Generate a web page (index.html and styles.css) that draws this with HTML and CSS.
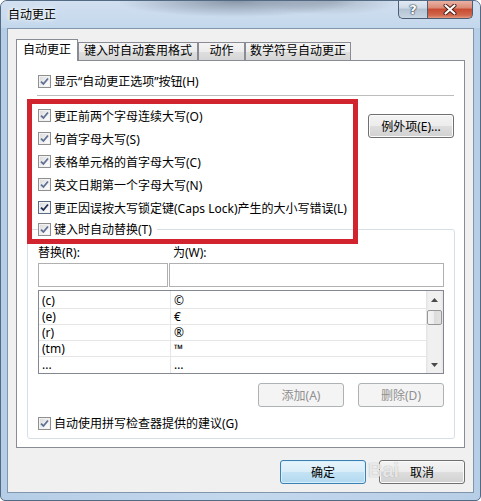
FILE: index.html
```html
<!DOCTYPE html>
<html lang="zh-CN">
<head>
<meta charset="utf-8">
<title>自动更正</title>
<link rel="stylesheet" href="styles.css">
</head>
<body>
<div class="window">
  <div class="titlebar">
    <span class="title">自动更正</span>
    <div class="caps">
      <div class="cap help">?</div>
      <div class="cap close">
        <svg width="14" height="11" viewBox="0 0 14 11"><path class="x-out" d="M2.5 1.5 L11.5 9.5 M11.5 1.5 L2.5 9.5"/><path class="x-in" d="M2.5 1.5 L11.5 9.5 M11.5 1.5 L2.5 9.5"/></svg>
      </div>
    </div>
  </div>
  <div class="body">
    <div class="client">
      <div class="tabs">
        <div class="tab active t1">自动更正</div>
        <div class="tab t2">键入时自动套用格式</div>
        <div class="tab t3">动作</div>
        <div class="tab t4">数学符号自动更正</div>
      </div>
      <div class="panel">
        <div class="row show-row"><span class="cb"><svg width="9" height="9" viewBox="0 0 9 9"><path d="M1 4.6 L3.4 7 L8 1.5"/></svg></span><span>显示“自动更正选项”按钮(H)</span></div>
        <div class="sep"></div>
        <div class="opts">
          <div class="opt-list">
            <div class="row"><span class="cb"><svg width="9" height="9" viewBox="0 0 9 9"><path d="M1 4.6 L3.4 7 L8 1.5"/></svg></span><span>更正前两个字母连续大写(O)</span></div>
            <div class="row"><span class="cb"><svg width="9" height="9" viewBox="0 0 9 9"><path d="M1 4.6 L3.4 7 L8 1.5"/></svg></span><span>句首字母大写(S)</span></div>
            <div class="row"><span class="cb"><svg width="9" height="9" viewBox="0 0 9 9"><path d="M1 4.6 L3.4 7 L8 1.5"/></svg></span><span>表格单元格的首字母大写(C)</span></div>
            <div class="row"><span class="cb"><svg width="9" height="9" viewBox="0 0 9 9"><path d="M1 4.6 L3.4 7 L8 1.5"/></svg></span><span>英文日期第一个字母大写(N)</span></div>
            <div class="row"><span class="cb dark"><svg width="9" height="9" viewBox="0 0 9 9"><path d="M1 4.6 L3.4 7 L8 1.5"/></svg></span><span>更正因误按大写锁定键(Caps Lock)产生的大小写错误(L)</span></div>
          </div>
          <button class="btn exc">例外项(E)...</button>
        </div>
        <fieldset class="group">
          <legend><span class="row"><span class="cb"><svg width="9" height="9" viewBox="0 0 9 9"><path d="M1 4.6 L3.4 7 L8 1.5"/></svg></span><span>键入时自动替换(T)</span></span></legend>
          <div class="labels"><span class="lbl1">替换(R):</span><span>为(W):</span></div>
          <div class="inputs"><div class="input i1"></div><div class="input i2"></div></div>
          <div class="list">
            <div class="grid">
              <div class="lrow"><span class="c1">(c)</span><span class="c2">©</span></div>
              <div class="lrow"><span class="c1">(e)</span><span class="c2">€</span></div>
              <div class="lrow"><span class="c1">(r)</span><span class="c2">®</span></div>
              <div class="lrow"><span class="c1">(tm)</span><span class="c2">™</span></div>
              <div class="lrow last"><span class="c1">...</span><span class="c2">…</span></div>
            </div>
            <div class="sb">
              <div class="sb-btn"><svg width="7" height="4" viewBox="0 0 7 4"><path d="M0 4 L3.5 0 L7 4 Z"/></svg></div>
              <div class="sb-track"><div class="thumb"></div></div>
              <div class="sb-btn"><svg width="7" height="4" viewBox="0 0 7 4"><path d="M0 0 L7 0 L3.5 4 Z"/></svg></div>
            </div>
          </div>
          <div class="grp-btns">
            <button class="btn dis">添加(A)</button>
            <button class="btn dis">删除(D)</button>
          </div>
          <div class="row spell-row"><span class="cb"><svg width="9" height="9" viewBox="0 0 9 9"><path d="M1 4.6 L3.4 7 L8 1.5"/></svg></span><span>自动使用拼写检查器提供的建议(G)</span></div>
        </fieldset>
        <div class="redbox"></div>
      </div>
      <div class="footer">
        <button class="btn def">确定</button>
        <button class="btn">取消</button>
      </div>
    </div>
  </div>
  <div class="wm">Bai</div>
</div>
</body>
</html>
```

FILE: styles.css
```css
html, body {
  margin: 0;
  padding: 0;
}
body {
  width: 481px;
  height: 501px;
  overflow: hidden;
  font-family: "Noto Sans", "Noto Sans CJK SC", sans-serif;
  font-size: 12px;
  color: #000;
  background: #fff;
}
.window {
  position: relative;
  width: 481px;
  height: 501px;
  box-sizing: border-box;
  border: 1px solid #536a84;
  border-radius: 7px 7px 5px 5px;
  background: linear-gradient(to right, #b5cde6, #c4d8ed 50%, #b7cee7);
  display: flex;
  flex-direction: column;
  overflow: hidden;
}
.titlebar {
  flex: none;
  height: 27px;
  display: flex;
  justify-content: space-between;
  align-items: flex-start;
  padding: 0 7px;
  background:
    radial-gradient(ellipse 120px 16px at 235px 0, rgba(78, 90, 108, .55), rgba(78, 90, 108, 0)),
    radial-gradient(ellipse 70px 14px at 330px 0, rgba(95, 105, 120, .35), rgba(95, 105, 120, 0)),
    linear-gradient(#d2e0f0, #c3d7ec);
}
.title {
  line-height: 26px;
  padding-top: 1px;
  white-space: nowrap;
  text-shadow: 0 0 6px #fff, 0 0 3px #fff;
}
.caps {
  display: flex;
  margin-top: -1px;
}
.cap {
  height: 19px;
  box-sizing: border-box;
  display: flex;
  align-items: center;
  justify-content: center;
  border: 1px solid #4c5d75;
  border-top: none;
}
.help {
  width: 29px;
  border-right: none;
  border-radius: 0 0 0 5px;
  background: linear-gradient(#e4ecf5, #cfdae6 45%, #b3c2d3 50%, #c8d5e2);
  color: #fff;
  font: bold 13px "DejaVu Sans", sans-serif;
  text-shadow: 0 0 1px #2c3a50, 0 0 1px #2c3a50, 0 0 2px #2c3a50;
}
.close {
  width: 46px;
  border-radius: 0 0 5px 0;
  background: linear-gradient(#ebb6a9, #db8a76 45%, #c74a30 50%, #d1684c 85%, #e59a80);
}
.x-out { stroke: #4a1c14; stroke-width: 4; stroke-linecap: round; fill: none; }
.x-in { stroke: #fff; stroke-width: 2.2; stroke-linecap: round; fill: none; }

.body {
  flex: 1;
  display: flex;
  padding: 0 6px 7px;
}
.client {
  flex: 1;
  box-sizing: border-box;
  border: 1px solid #8195ad;
  background: #f0f0f0;
  display: flex;
  flex-direction: column;
  padding: 10px 8px 8px;
}
.tabs {
  display: flex;
  height: 21px;
  align-items: flex-end;
  position: relative;
  z-index: 1;
  flex: none;
}
.tab {
  box-sizing: border-box;
  height: 18px;
  border: 1px solid #898c95;
  border-bottom: none;
  background: linear-gradient(#f4f4f4, #ececec 50%, #dfdfdf 50%, #d6d6d6);
  text-align: center;
  line-height: 15px;
  white-space: nowrap;
}
.tab.active {
  height: 22px;
  margin-bottom: -1px;
  background: #fff;
  line-height: 19px;
}
.t1 { width: 62px; }
.t2 { width: 120px; }
.t3 { width: 47px; }
.t4 { width: 106px; }

.panel {
  flex: none;
  position: relative;
  height: 388px;
  box-sizing: border-box;
  border: 1px solid #898c95;
  background: #fff;
  padding-top: 10px;
  display: flex;
  flex-direction: column;
}
.row {
  display: flex;
  align-items: center;
  gap: 3px;
  height: 20px;
  white-space: nowrap;
}
.cb {
  flex: none;
  width: 13px;
  height: 13px;
  box-sizing: border-box;
  border: 1px solid #8e8f8f;
  background: linear-gradient(135deg, #d8d8d8, #f6f6f6 70%, #fff);
  box-shadow: inset 0 0 0 1px #f2f2f2;
  display: flex;
  align-items: center;
  justify-content: center;
}
.cb path {
  fill: none;
  stroke: #5f7095;
  stroke-width: 1.8;
}
.cb.dark { border-color: #5a6b85; }
.cb.dark path { stroke: #1b2d55; }

.show-row { margin-left: 21px; }
.sep {
  flex: none;
  height: 1px;
  background: #bcbcbc;
  margin: 4px 10px 0 20px;
}
.opts {
  display: flex;
  margin-top: 8px;
}
.opt-list {
  margin-left: 21px;
  display: flex;
  flex-direction: column;
}
.opt-list .row { height: 23px; }

.btn {
  font: inherit;
  color: #000;
  box-sizing: border-box;
  width: 86px;
  height: 24px;
  padding: 0;
  border: 1px solid #707070;
  border-radius: 3px;
  background: linear-gradient(#f3f3f3, #ececec 50%, #dedede 50%, #d1d1d1);
  box-shadow: inset 0 0 0 1px #fbfbfb;
  white-space: nowrap;
}
.exc {
  margin-left: auto;
  margin-right: 10px;
  margin-top: 10px;
}
.btn.dis {
  color: #8f8f8f;
  border-color: #adb2b5;
  background: #f4f4f4;
  box-shadow: none;
}
.btn.def {
  border-color: #3c7fb1;
  background: linear-gradient(#e8f4fb, #d8edf9 50%, #c4e3f5 50%, #b2d8ef);
  box-shadow: inset 0 0 0 1px #d6f0fc;
}

.group {
  margin: 0 9px 0 10px;
  padding: 0 10px 5px;
  border: 1px solid #d5dfe5;
  border-radius: 3px;
  min-width: 0;
}
.group legend {
  padding: 0 5px 0 0;
  margin: 0;
}
.labels {
  display: flex;
  margin-top: 6px;
  height: 16px;
  line-height: 16px;
}
.lbl1 { width: 135px; }
.inputs {
  display: flex;
  gap: 1px;
  margin-top: 2px;
}
.input {
  height: 24px;
  box-sizing: border-box;
  border: 1px solid #b0b0b0;
  background: #fff;
}
.i1 { width: 130px; }
.i2 { flex: 1; }

.list {
  margin-top: 3px;
  height: 84px;
  box-sizing: border-box;
  border: 1px solid #828790;
  background: #fff;
  display: flex;
}
.grid {
  flex: 1;
  padding-top: 2px;
  overflow: hidden;
  background: linear-gradient(to right, transparent 131px, #e6e6e6 131px, #e6e6e6 132px, transparent 132px);
}
.lrow {
  display: flex;
  height: 16px;
  box-sizing: border-box;
  border-bottom: 1px solid #e6e6e6;
  line-height: 15px;
}
.lrow.last { border-bottom: none; }
.c1 {
  width: 132px;
  box-sizing: border-box;
  padding-left: 3px;
}
.c2 {
  padding-left: 3px;
}
.sb {
  width: 17px;
  flex: none;
  display: flex;
  flex-direction: column;
  background: linear-gradient(to right, #e2e2e2, #f0f0f0 15%, #f0f0f0 85%, #e6e6e6);
}
.sb-btn {
  height: 17px;
  display: flex;
  align-items: center;
  justify-content: center;
}
.sb-btn path { fill: #4a4a4a; }
.sb-track {
  flex: 1;
  padding-top: 2px;
}
.thumb {
  margin: 0 1px;
  height: 15px;
  box-sizing: border-box;
  border: 1px solid #979797;
  border-radius: 2px;
  background: linear-gradient(to right, #f5f5f5, #ececec 50%, #dcdcdc 50%, #e2e2e2);
}
.grp-btns {
  display: flex;
  justify-content: flex-end;
  gap: 14px;
  margin-top: 9px;
}
.spell-row { margin-top: 6px; }

.redbox {
  position: absolute;
  left: 10px;
  top: 38px;
  width: 331px;
  height: 145px;
  box-sizing: border-box;
  border: 5px solid #d2242f;
  pointer-events: none;
}

.footer {
  flex: none;
  display: flex;
  justify-content: flex-end;
  gap: 13px;
  margin-top: 12px;
}

.wm {
  position: absolute;
  left: 367px;
  top: 458px;
  font: bold 20px "Liberation Sans", sans-serif;
  color: rgba(255, 255, 255, .75);
  text-shadow: 0 0 1px rgba(90, 90, 90, .55);
  white-space: nowrap;
  pointer-events: none;
}
```
